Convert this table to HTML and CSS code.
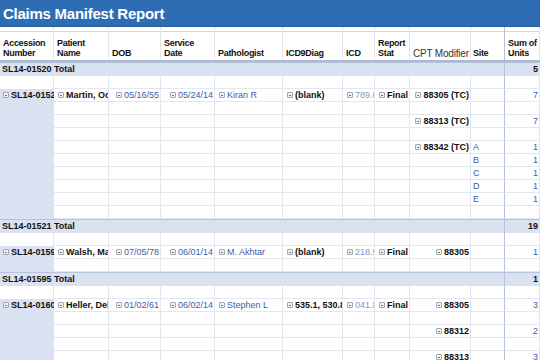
FILE: index.html
```html
<!DOCTYPE html>
<html lang="en">
<head>
    <meta charset="UTF-8">
    <title>Claims Manifest Report</title>
    <link rel="stylesheet" href="styles.css">
</head>
<body>
    <div class="report">
        <div class="title">Claims Manifest Report</div>

        <div class="cols head">
            <div>Accession<br>Number</div>
            <div>Patient<br>Name</div>
            <div>DOB</div>
            <div>Service<br>Date</div>
            <div>Pathologist</div>
            <div>ICD9Diag</div>
            <div>ICD</div>
            <div>Report<br>Stat</div>
            <div class="plain">CPT Modifier</div>
            <div>Site</div>
            <div>Sum of<br>Units</div>
        </div>

        <div class="total"><div>SL14-01520 Total</div><div class="sum">5</div></div>
        <div class="cols row"><div class="cell acc-blank"></div><div class="cell"></div><div class="cell"></div><div class="cell"></div><div class="cell"></div><div class="cell"></div><div class="cell"></div><div class="cell"></div><div class="cell"></div><div class="cell site"></div><div class="cell"></div></div>

        <!-- SL14-01521 -->
        <div class="group">
            <div class="acc"><span class="tog"></span>SL14-01521</div>
            <div class="rows">
                <div class="sub row">
                    <div class="cell b"><span class="tog"></span>Martin, Octavia</div>
                    <div class="cell v r"><span class="tog"></span>05/16/55</div>
                    <div class="cell v r"><span class="tog"></span>05/24/14</div>
                    <div class="cell v"><span class="tog"></span>Kiran R</div>
                    <div class="cell b"><span class="tog"></span>(blank)</div>
                    <div class="cell dim"><span class="tog"></span>789.00</div>
                    <div class="cell b"><span class="tog"></span>Final</div>
                    <div class="cell b r"><span class="tog"></span>88305 (TC)</div>
                    <div class="cell site"></div>
                    <div class="cell v r">7</div>
                </div>
                <div class="sub row"><div class="cell"></div><div class="cell"></div><div class="cell"></div><div class="cell"></div><div class="cell"></div><div class="cell"></div><div class="cell"></div><div class="cell"></div><div class="cell site"></div><div class="cell"></div></div>
                <div class="sub row"><div class="cell"></div><div class="cell"></div><div class="cell"></div><div class="cell"></div><div class="cell"></div><div class="cell"></div><div class="cell"></div><div class="cell b r"><span class="tog"></span>88313 (TC)</div><div class="cell site"></div><div class="cell v r">7</div></div>
                <div class="sub row"><div class="cell"></div><div class="cell"></div><div class="cell"></div><div class="cell"></div><div class="cell"></div><div class="cell"></div><div class="cell"></div><div class="cell"></div><div class="cell site"></div><div class="cell"></div></div>
                <div class="sub row"><div class="cell"></div><div class="cell"></div><div class="cell"></div><div class="cell"></div><div class="cell"></div><div class="cell"></div><div class="cell"></div><div class="cell b r"><span class="tog"></span>88342 (TC)</div><div class="cell site v">A</div><div class="cell v r">1</div></div>
                <div class="sub row"><div class="cell"></div><div class="cell"></div><div class="cell"></div><div class="cell"></div><div class="cell"></div><div class="cell"></div><div class="cell"></div><div class="cell"></div><div class="cell site v">B</div><div class="cell v r">1</div></div>
                <div class="sub row"><div class="cell"></div><div class="cell"></div><div class="cell"></div><div class="cell"></div><div class="cell"></div><div class="cell"></div><div class="cell"></div><div class="cell"></div><div class="cell site v">C</div><div class="cell v r">1</div></div>
                <div class="sub row"><div class="cell"></div><div class="cell"></div><div class="cell"></div><div class="cell"></div><div class="cell"></div><div class="cell"></div><div class="cell"></div><div class="cell"></div><div class="cell site v">D</div><div class="cell v r">1</div></div>
                <div class="sub row"><div class="cell"></div><div class="cell"></div><div class="cell"></div><div class="cell"></div><div class="cell"></div><div class="cell"></div><div class="cell"></div><div class="cell"></div><div class="cell site v">E</div><div class="cell v r">1</div></div>
                <div class="sub row"><div class="cell"></div><div class="cell"></div><div class="cell"></div><div class="cell"></div><div class="cell"></div><div class="cell"></div><div class="cell"></div><div class="cell"></div><div class="cell site"></div><div class="cell"></div></div>
            </div>
        </div>

        <div class="total"><div>SL14-01521 Total</div><div class="sum">19</div></div>
        <div class="cols row"><div class="cell acc-blank"></div><div class="cell"></div><div class="cell"></div><div class="cell"></div><div class="cell"></div><div class="cell"></div><div class="cell"></div><div class="cell"></div><div class="cell"></div><div class="cell site"></div><div class="cell"></div></div>

        <!-- SL14-01595 -->
        <div class="group">
            <div class="acc"><span class="tog"></span>SL14-01595</div>
            <div class="rows">
                <div class="sub row">
                    <div class="cell b"><span class="tog"></span>Walsh, Mary</div>
                    <div class="cell v r"><span class="tog"></span>07/05/78</div>
                    <div class="cell v r"><span class="tog"></span>06/01/14</div>
                    <div class="cell v"><span class="tog"></span>M. Akhtar</div>
                    <div class="cell b"><span class="tog"></span>(blank)</div>
                    <div class="cell dim"><span class="tog"></span>218.9</div>
                    <div class="cell b"><span class="tog"></span>Final</div>
                    <div class="cell b r"><span class="tog"></span>88305</div>
                    <div class="cell site"></div>
                    <div class="cell v r">1</div>
                </div>
                <div class="sub row"><div class="cell"></div><div class="cell"></div><div class="cell"></div><div class="cell"></div><div class="cell"></div><div class="cell"></div><div class="cell"></div><div class="cell"></div><div class="cell site"></div><div class="cell"></div></div>
            </div>
        </div>

        <div class="total"><div>SL14-01595 Total</div><div class="sum">1</div></div>
        <div class="cols row"><div class="cell acc-blank"></div><div class="cell"></div><div class="cell"></div><div class="cell"></div><div class="cell"></div><div class="cell"></div><div class="cell"></div><div class="cell"></div><div class="cell"></div><div class="cell site"></div><div class="cell"></div></div>

        <!-- SL14-01603 -->
        <div class="group">
            <div class="acc"><span class="tog"></span>SL14-01603</div>
            <div class="rows">
                <div class="sub row">
                    <div class="cell b"><span class="tog"></span>Heller, Debra</div>
                    <div class="cell v r"><span class="tog"></span>01/02/61</div>
                    <div class="cell v r"><span class="tog"></span>06/02/14</div>
                    <div class="cell v"><span class="tog"></span>Stephen L</div>
                    <div class="cell b"><span class="tog"></span>535.1, 530.81</div>
                    <div class="cell dim"><span class="tog"></span>041.89</div>
                    <div class="cell b"><span class="tog"></span>Final</div>
                    <div class="cell b r"><span class="tog"></span>88305</div>
                    <div class="cell site"></div>
                    <div class="cell v r">3</div>
                </div>
                <div class="sub row"><div class="cell"></div><div class="cell"></div><div class="cell"></div><div class="cell"></div><div class="cell"></div><div class="cell"></div><div class="cell"></div><div class="cell"></div><div class="cell site"></div><div class="cell"></div></div>
                <div class="sub row"><div class="cell"></div><div class="cell"></div><div class="cell"></div><div class="cell"></div><div class="cell"></div><div class="cell"></div><div class="cell"></div><div class="cell b r"><span class="tog"></span>88312</div><div class="cell site"></div><div class="cell v r">2</div></div>
                <div class="sub row"><div class="cell"></div><div class="cell"></div><div class="cell"></div><div class="cell"></div><div class="cell"></div><div class="cell"></div><div class="cell"></div><div class="cell"></div><div class="cell site"></div><div class="cell"></div></div>
                <div class="sub row"><div class="cell"></div><div class="cell"></div><div class="cell"></div><div class="cell"></div><div class="cell"></div><div class="cell"></div><div class="cell"></div><div class="cell b r"><span class="tog"></span>88313</div><div class="cell site"></div><div class="cell v r">3</div></div>
            </div>
        </div>
    </div>
</body>
</html>
```

FILE: styles.css
```css
:root {
    --title-bg: #2E6DB3;
    --band: #DAE1F0;
    --grid-line: #E2E5EC;
    --row-line: #E3E7F0;
    --band-line: #B7C3DC;
    --value: #3F5DA6;
    --value-dim: #8496C6;
    --text: #111111;
}

* {
    margin: 0;
    padding: 0;
    box-sizing: border-box;
}

body {
    font-family: 'Liberation Sans', Arial, sans-serif;
    font-size: 9px;
    color: var(--text);
    background: #ffffff;
    width: 540px;
    height: 360px;
    overflow: hidden;
}

.title {
    height: 27px;
    background: var(--title-bg);
    border-bottom: 1px solid #27609F;
    color: #ffffff;
    font-size: 15px;
    font-weight: bold;
    letter-spacing: -0.25px;
    padding: 5px 0 0 3px;
}

/* Column templates */
.cols {
    display: grid;
    grid-template-columns: 54px 55px 52px 54px 68px 60px 32px 35px 61px 34px 1fr;
}

.sub {
    display: grid;
    grid-template-columns: 55px 52px 54px 68px 60px 32px 35px 61px 34px 1fr;
}

/* Header */
.head {
    height: 35px;
    border-bottom: 2px solid #AEB9D1;
    background: linear-gradient(#D3D9E6, #D3D9E6) 0 4px / 100% 1px no-repeat;
}

.head > div {
    display: flex;
    align-items: flex-end;
    padding: 0 0 2px 3px;
    border-right: 1px solid var(--grid-line);
    font-weight: bold;
    line-height: 10px;
    letter-spacing: -0.3px;
    white-space: nowrap;
    overflow: hidden;
}

.head > div:nth-child(10) {
    border-right-color: var(--band-line);
    padding-left: 2px;
}

.head .plain {
    font-weight: normal;
    font-size: 10px;
    color: #333333;
    letter-spacing: -0.2px;
    padding-bottom: 1px;
}

/* Total rows */
.total {
    display: grid;
    grid-template-columns: 504px 1fr;
    height: 14px;
    background: var(--band);
    border-top: 1px solid var(--band-line);
    font-weight: bold;
    line-height: 13px;
}

.total > div {
    padding-left: 2px;
    white-space: nowrap;
}

.total .sum {
    border-left: 1px solid var(--band-line);
    text-align: right;
    padding-right: 2px;
}

/* Data rows */
.cell {
    height: 13px;
    line-height: 12px;
    padding-left: 4px;
    border-right: 1px solid var(--grid-line);
    border-bottom: 1px solid var(--row-line);
    white-space: nowrap;
    overflow: hidden;
}

.cell.site {
    border-right-color: var(--band-line);
    padding-left: 2px;
}

.cell.acc-blank {
    border-bottom: none;
}

.group {
    display: flex;
}

.acc {
    flex: none;
    width: 54px;
    padding-left: 3px;
    background: var(--band);
    font-weight: bold;
    line-height: 12px;
    white-space: nowrap;
    overflow: hidden;
}

.rows {
    flex: 1;
}

.b {
    font-weight: bold;
}

.v {
    color: var(--value);
}

.dim {
    color: var(--value-dim);
}

.r {
    text-align: right;
    padding-left: 0;
    padding-right: 1px;
}

/* Collapse toggle */
.tog {
    display: inline-block;
    width: 6px;
    height: 6px;
    margin-right: 2px;
    border: 1px solid #A2A8B2;
    border-radius: 1px;
    background: linear-gradient(#6E737C, #6E737C) center / 2px 1px no-repeat, #F2F3F5;
    vertical-align: 0;
}
```
